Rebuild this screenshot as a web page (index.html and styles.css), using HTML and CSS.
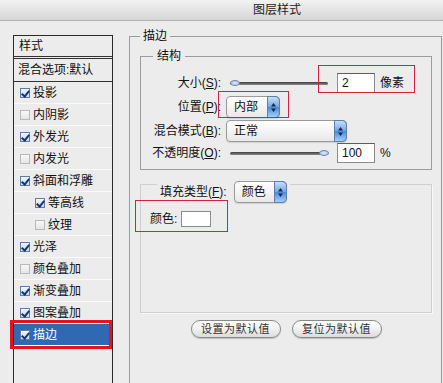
FILE: index.html
```html
<!DOCTYPE html>
<html lang="zh-CN">
  <head>
    <meta charset="UTF-8" />
    <meta name="viewport" content="width=device-width, initial-scale=1.0" />
    <title>图层样式</title>
    <link rel="stylesheet" href="styles.css">
  </head>
  <body>
    <div class="titlebar">图层样式</div>
    <div class="main">
      <div class="styles">
        <div class="styles-head">样式</div>
        <div class="styles-blend">混合选项:默认</div>
        <div class="item"><span class="cb on"></span>投影</div>
        <div class="item"><span class="cb"></span>内阴影</div>
        <div class="item"><span class="cb on"></span>外发光</div>
        <div class="item"><span class="cb"></span>内发光</div>
        <div class="item"><span class="cb on"></span>斜面和浮雕</div>
        <div class="item sub"><span class="cb on"></span>等高线</div>
        <div class="item sub"><span class="cb"></span>纹理</div>
        <div class="item"><span class="cb on"></span>光泽</div>
        <div class="item"><span class="cb"></span>颜色叠加</div>
        <div class="item"><span class="cb on"></span>渐变叠加</div>
        <div class="item"><span class="cb on"></span>图案叠加</div>
        <div class="item active"><span class="cb on"></span>描边<span class="mark mark-item"></span></div>
      </div>

      <fieldset class="stroke">
        <legend>描边</legend>
        <fieldset class="structure">
          <legend>结构</legend>
          <div class="row">
            <label class="lbl">大小(<u>S</u>):</label>
            <span class="slider"><span class="thumb"></span></span>
            <span class="num">2</span>
            <span class="unit">像素</span>
            <span class="mark mark-size"></span>
          </div>
          <div class="row">
            <label class="lbl">位置(<u>P</u>):</label>
            <span class="select sel-pos">内部<span class="arrows"><svg width="7" height="11" viewBox="0 0 7 11"><path d="M3.5 1 L6 4.5 H1 Z M3.5 10 L6 6.5 H1 Z" fill="#102a55"/></svg></span></span>
            <span class="mark mark-pos"></span>
          </div>
          <div class="row">
            <label class="lbl">混合模式(<u>B</u>):</label>
            <span class="select sel-blend">正常<span class="arrows"><svg width="7" height="11" viewBox="0 0 7 11"><path d="M3.5 1 L6 4.5 H1 Z M3.5 10 L6 6.5 H1 Z" fill="#102a55"/></svg></span></span>
          </div>
          <div class="row row-last">
            <label class="lbl">不透明度(<u>O</u>):</label>
            <span class="slider"><span class="thumb end"></span></span>
            <span class="num">100</span>
            <span class="unit">%</span>
          </div>
        </fieldset>

        <div class="fill">
          <div class="fill-head">
            <label>填充类型(<u>F</u>):</label>
            <span class="select sel-fill">颜色<span class="arrows"><svg width="7" height="11" viewBox="0 0 7 11"><path d="M3.5 1 L6 4.5 H1 Z M3.5 10 L6 6.5 H1 Z" fill="#102a55"/></svg></span></span>
          </div>
          <div class="color-row">
            <label>颜色:</label>
            <span class="swatch"></span>
            <span class="mark mark-color"></span>
          </div>
        </div>

        <div class="buttons">
          <button class="pill">设置为默认值</button>
          <button class="pill">复位为默认值</button>
        </div>
      </fieldset>
    </div>
  </body>
</html>
```

FILE: styles.css
```css
html,
body {
  margin: 0;
  overflow: hidden;
}
body {
  width: 443px;
  height: 383px;
  background: #ececec;
  font-family: 'Liberation Sans', 'Noto Sans CJK SC', sans-serif;
  font-size: 12px;
  line-height: 14px;
  color: #111;
  white-space: nowrap;
}
u {
  text-decoration: underline;
}

.titlebar {
  height: 20px;
  line-height: 20px;
  padding-left: 111px;
  text-align: center;
  font-size: 12px;
  color: #222;
  background: linear-gradient(#f2f2f2, #d6d6d6);
  border-bottom: 1px solid #b0b0b0;
}

.main {
  display: flex;
  align-items: flex-start;
  height: 362px;
  overflow: hidden;
}

/* left list */
.styles {
  box-sizing: border-box;
  width: 100px;
  height: 400px;
  margin: 14px 0 0 13px;
  border: 1px solid #2a2a2a;
  flex: none;
}
.styles-head {
  height: 20px;
  line-height: 20px;
  padding-left: 5px;
  border-bottom: 3px double #333;
}
.styles-blend {
  height: 22px;
  line-height: 22px;
  padding-left: 4px;
  border-bottom: 1px solid #333;
}
.item {
  position: relative;
  display: flex;
  align-items: center;
  height: 21px;
  padding-left: 6px;
  border-bottom: 1px solid #fafafa;
}
.item.sub {
  padding-left: 21px;
}
.item.active {
  background: #2f69b3;
  color: #fff;
}
.cb {
  position: relative;
  box-sizing: border-box;
  width: 10px;
  height: 10px;
  margin-right: 3px;
  border: 1px solid #b9b9b9;
  background: linear-gradient(#f8f8f8, #e6e6e6);
}
.cb.on {
  border-color: #5d7fa6;
  background: linear-gradient(#f2f6fb, #c9d7ea);
}
.cb.on::after {
  content: '';
  position: absolute;
  left: 2px;
  top: 0;
  width: 3px;
  height: 6px;
  border-right: 2px solid #17376b;
  border-bottom: 2px solid #17376b;
  transform: rotate(40deg);
}

/* red highlight marks */
.mark {
  position: absolute;
  box-sizing: border-box;
  border: 1px solid #d0253a;
  pointer-events: none;
}
.mark-item {
  left: -4px;
  top: -4px;
  width: 102px;
  height: 29px;
  border: 3px solid #e3141d;
}
.mark-size {
  left: 177px;
  top: -7px;
  width: 97px;
  height: 28px;
}
.mark-pos {
  left: 77px;
  top: -5px;
  width: 71px;
  height: 27px;
}
.mark-color {
  left: -6px;
  top: -11px;
  width: 93px;
  height: 32px;
}

/* right side */
fieldset {
  margin: 0;
  min-width: 0;
}
legend {
  padding: 0 4px;
  line-height: 14px;
}
.stroke {
  box-sizing: border-box;
  width: 313px;
  height: 400px;
  margin: 8px 0 0 16px;
  padding: 6px 9px 0 10px;
  border: 1px solid #9c9c9c;
  flex: none;
}
.stroke > legend {
  padding: 0 3px;
}
.structure {
  box-sizing: border-box;
  width: 292px;
  padding: 9px 0 6px 0;
  border: 1px solid #9c9c9c;
  display: flex;
  flex-direction: column;
  gap: 2px;
}
.structure > legend {
  margin-left: 12px;
}
.row {
  position: relative;
  display: flex;
  align-items: center;
  height: 22px;
}
.row-last {
  height: 20px;
  margin-top: -1px;
}
.lbl {
  width: 80px;
  text-align: right;
  margin-right: 5px;
  flex: none;
}

.slider {
  position: relative;
  width: 98px;
  height: 3px;
  margin: 0 9px 0 4px;
  border-radius: 2px;
  background: linear-gradient(#3e3e3e, #8a8a8a);
}
.thumb {
  position: absolute;
  left: 0;
  top: -2px;
  width: 10px;
  height: 6px;
  border-radius: 50%;
  box-sizing: border-box;
  border: 1px solid #6f87ad;
  background: radial-gradient(#e4eefb, #8fb0dc);
}
.thumb.end {
  left: auto;
  right: -1px;
}
.num {
  box-sizing: border-box;
  width: 38px;
  height: 20px;
  line-height: 18px;
  padding-left: 4px;
  background: #fff;
  border: 1px solid #8c8c8c;
  border-top-color: #5e5e5e;
}
.unit {
  margin-left: 5px;
}

.select {
  position: relative;
  box-sizing: border-box;
  display: flex;
  align-items: center;
  height: 22px;
  padding-left: 7px;
  border: 1px solid #9a9a9a;
  border-radius: 4px;
  background: linear-gradient(#ffffff, #f4f4f4 50%, #e8e8e8);
  box-shadow: 0 1px 1px rgba(0, 0, 0, 0.12);
}
.sel-pos {
  width: 54px;
}
.sel-blend {
  width: 121px;
}
.sel-fill {
  width: 53px;
  margin-left: 7px;
}
.arrows {
  position: absolute;
  right: -1px;
  top: -1px;
  bottom: -1px;
  width: 13px;
  display: flex;
  align-items: center;
  justify-content: center;
  border-radius: 0 5px 5px 0;
  border: 1px solid #5a7fb0;
  box-sizing: border-box;
  background: linear-gradient(#c7def8, #72a8e6 48%, #4a8ad8 52%, #a6cff5);
}

.fill {
  box-sizing: border-box;
  width: 292px;
  height: 129px;
  margin-top: 14px;
  border: 1px solid #cfcfcf;
  box-shadow: 1px 1px 0 #fafafa;
}
.fill-head {
  display: inline-flex;
  align-items: center;
  margin: -7px 0 0 16px;
  padding: 0 3px;
  background: #ececec;
}
.color-row {
  position: relative;
  display: flex;
  align-items: center;
  height: 16px;
  margin-top: 8px;
  padding-left: 9px;
}
.swatch {
  box-sizing: border-box;
  width: 30px;
  height: 16px;
  margin-left: 4px;
  background: #fff;
  border: 1px solid #8c8c8c;
}

.buttons {
  display: flex;
  justify-content: center;
  gap: 11px;
  width: 292px;
  margin-top: 7px;
}
.pill {
  box-sizing: border-box;
  width: 90px;
  height: 18px;
  padding: 0;
  border: 1px solid #8a8a8a;
  border-radius: 9px;
  background: linear-gradient(#ffffff, #f0f0f0 50%, #dcdcdc);
  box-shadow: 0 1px 1px rgba(0, 0, 0, 0.2);
  font-family: 'Liberation Sans', 'Noto Sans CJK SC', sans-serif;
  font-size: 11px;
  line-height: 16px;
  letter-spacing: 0.5px;
  color: #333;
}
```
